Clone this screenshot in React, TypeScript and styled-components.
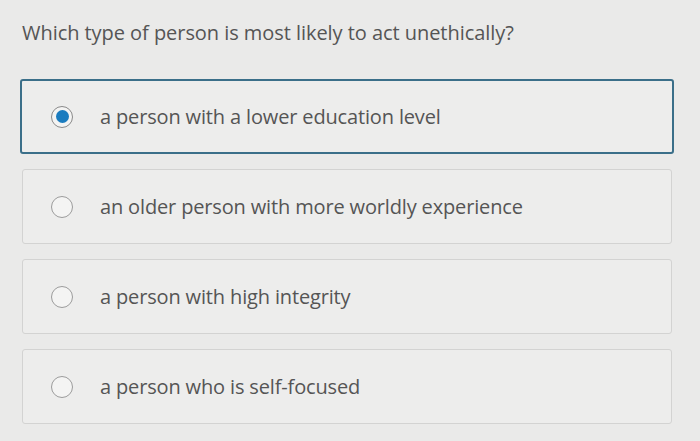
import React from "react";
import styled, { createGlobalStyle } from "styled-components";

const GlobalStyle = createGlobalStyle`
  html, body {
    margin: 0;
    padding: 0;
    background: #eaeae9;
  }
  body {
    font-family: "Open Sans", "Liberation Sans", sans-serif;
    color: #555;
  }
`;

const Page = styled.div`
  width: 700px;
  height: 441px;
  padding: 19px 26px 0 20px;
  box-sizing: border-box;
  overflow: hidden;
`;

const Question = styled.div`
  font-size: 20px;
  line-height: 28px;
  padding-left: 2px;
  letter-spacing: -0.05px;
  margin-bottom: 32px;
`;

const OptionList = styled.div`
  display: flex;
  flex-direction: column;
  gap: 15px;
`;

const Option = styled.label<{ $selected?: boolean }>`
  display: flex;
  align-items: center;
  height: 75px;
  box-sizing: border-box;
  padding-left: ${(p) => (p.$selected ? "29px" : "28px")};
  margin: ${(p) => (p.$selected ? "0" : "0 2px")};
  border: ${(p) => (p.$selected ? "2px solid #3b6f89" : "1px solid #d3d3d2")};
  border-radius: 3px;
  background: #ededec;
`;

const Radio = styled.span<{ $selected?: boolean }>`
  width: 22px;
  height: 22px;
  box-sizing: border-box;
  border-radius: 50%;
  border: 1.5px solid ${(p) => (p.$selected ? "#8a8a8a" : "#9c9c9c")};
  background: #f4f4f3;
  display: flex;
  align-items: center;
  justify-content: center;
  flex-shrink: 0;
  &::after {
    content: "";
    display: ${(p) => (p.$selected ? "block" : "none")};
    width: 13px;
    height: 13px;
    border-radius: 50%;
    background: #1b7cbf;
  }
`;

const OptionText = styled.span`
  font-size: 20px;
  margin-left: 27px;
  letter-spacing: -0.15px;
`;

const options = [
  "a person with a lower education level",
  "an older person with more worldly experience",
  "a person with high integrity",
  "a person who is self-focused",
];

export default function App() {
  return (
    <Page>
      <GlobalStyle />
      <Question>Which type of person is most likely to act unethically?</Question>
      <OptionList>
        {options.map((text, i) => (
          <Option key={text} $selected={i === 0}>
            <Radio $selected={i === 0} />
            <OptionText>{text}</OptionText>
          </Option>
        ))}
      </OptionList>
    </Page>
  );
}
